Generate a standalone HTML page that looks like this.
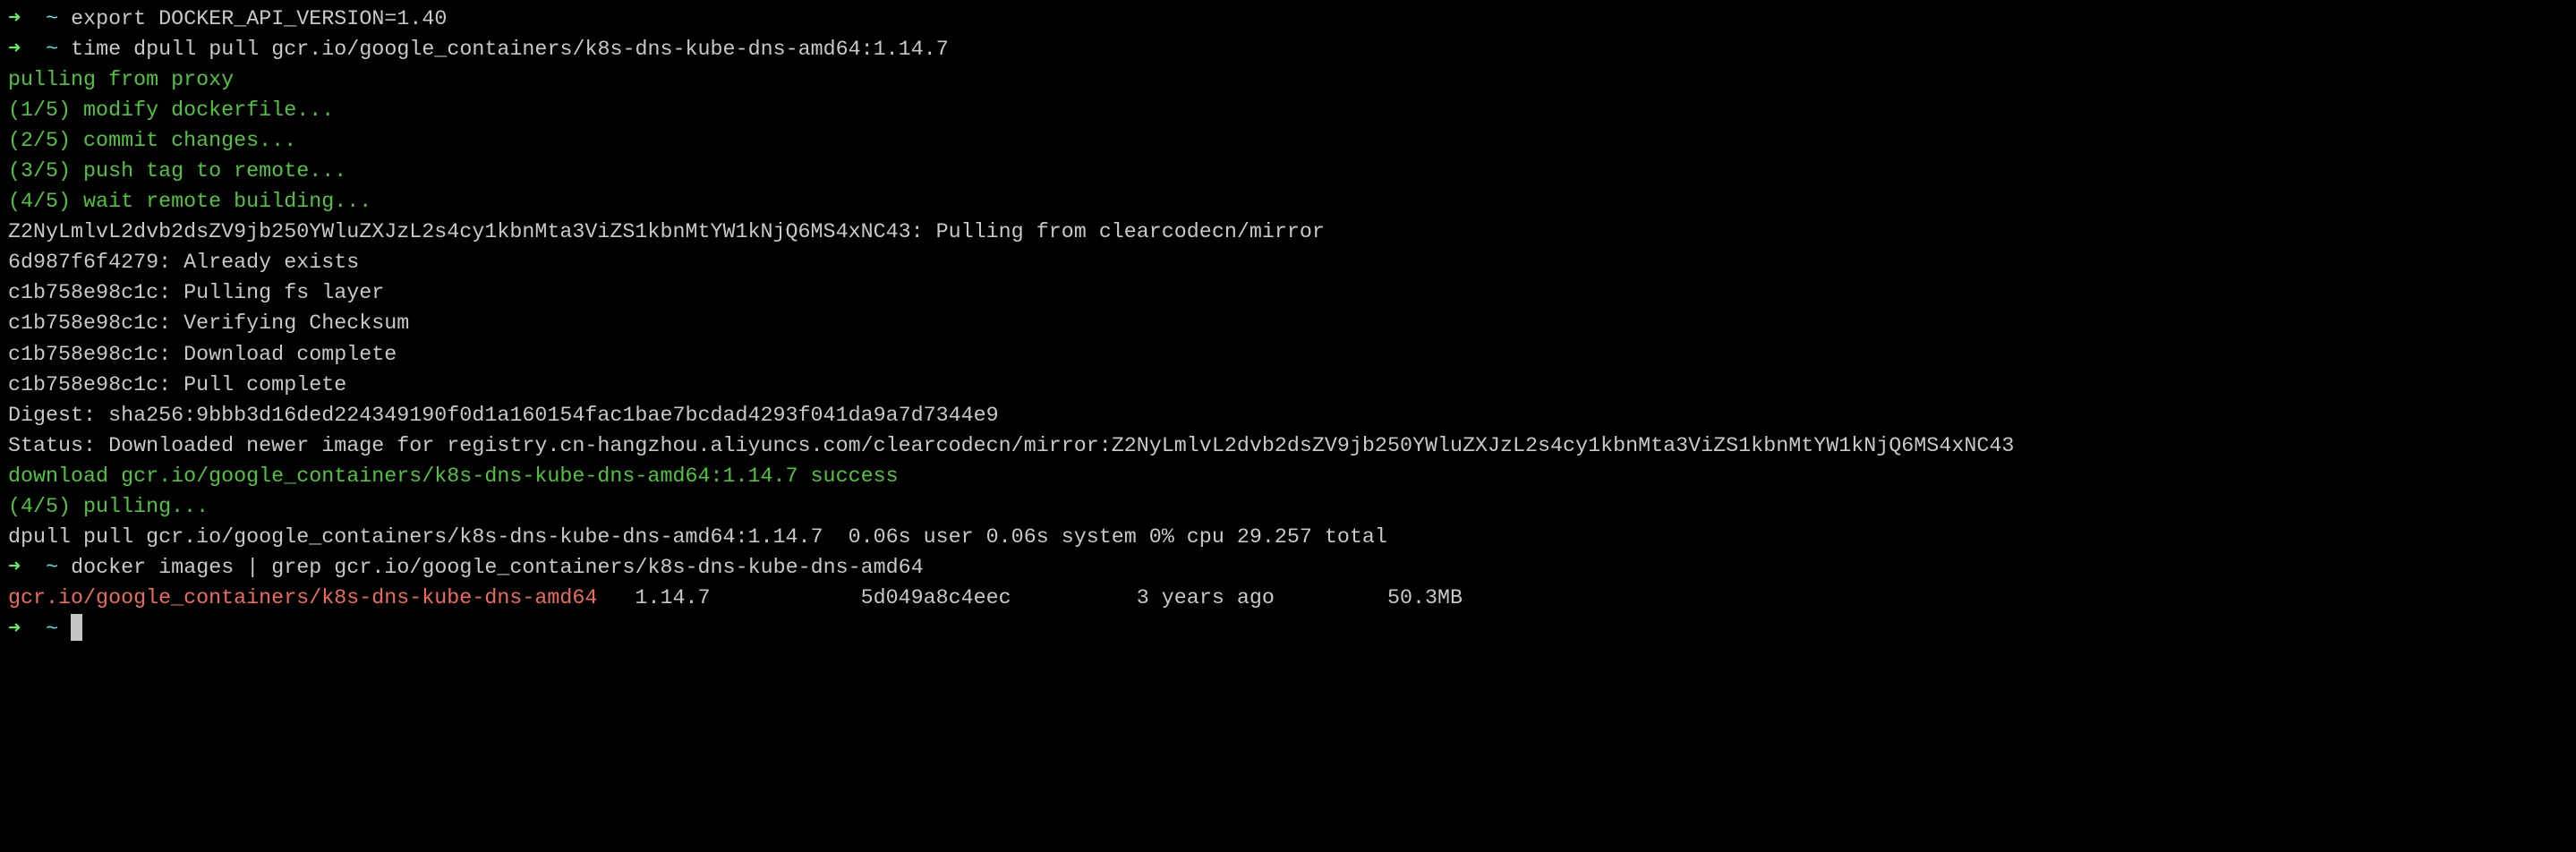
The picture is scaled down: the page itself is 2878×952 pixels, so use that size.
<!DOCTYPE html>
<html><head><meta charset="utf-8"><style>
html,body{margin:0;padding:0;background:#000;width:2878px;height:952px;overflow:hidden}
pre{margin:0;padding:5px 0 0 9px;font-family:"Liberation Mono","DejaVu Sans Mono",monospace;font-size:23.35px;line-height:34.05px;color:#c8c8c8;white-space:pre}
.a{color:#5ef25e}.t{color:#5fe0e6}.g{color:#4fc63a}.r{color:#f0695d}
.c{display:inline-block;width:13px;height:30px;background:#c4c4c4;vertical-align:-7px}
</style></head><body><pre><span class="a">➜</span>  <span class="t">~</span> export DOCKER_API_VERSION=1.40
<span class="a">➜</span>  <span class="t">~</span> time dpull pull gcr.io/google_containers/k8s-dns-kube-dns-amd64:1.14.7
<span class="g">pulling from proxy</span>
<span class="g">(1/5) modify dockerfile...</span>
<span class="g">(2/5) commit changes...</span>
<span class="g">(3/5) push tag to remote...</span>
<span class="g">(4/5) wait remote building...</span>
Z2NyLmlvL2dvb2dsZV9jb250YWluZXJzL2s4cy1kbnMta3ViZS1kbnMtYW1kNjQ6MS4xNC43: Pulling from clearcodecn/mirror
6d987f6f4279: Already exists
c1b758e98c1c: Pulling fs layer
c1b758e98c1c: Verifying Checksum
c1b758e98c1c: Download complete
c1b758e98c1c: Pull complete
Digest: sha256:9bbb3d16ded224349190f0d1a160154fac1bae7bcdad4293f041da9a7d7344e9
Status: Downloaded newer image for registry.cn-hangzhou.aliyuncs.com/clearcodecn/mirror:Z2NyLmlvL2dvb2dsZV9jb250YWluZXJzL2s4cy1kbnMta3ViZS1kbnMtYW1kNjQ6MS4xNC43
<span class="g">download gcr.io/google_containers/k8s-dns-kube-dns-amd64:1.14.7 success</span>
<span class="g">(4/5) pulling...</span>
dpull pull gcr.io/google_containers/k8s-dns-kube-dns-amd64:1.14.7  0.06s user 0.06s system 0% cpu 29.257 total
<span class="a">➜</span>  <span class="t">~</span> docker images | grep gcr.io/google_containers/k8s-dns-kube-dns-amd64
<span class="r">gcr.io/google_containers/k8s-dns-kube-dns-amd64</span>   1.14.7            5d049a8c4eec          3 years ago         50.3MB
<span class="a">➜</span>  <span class="t">~</span> <span class="c"></span></pre></body></html>
